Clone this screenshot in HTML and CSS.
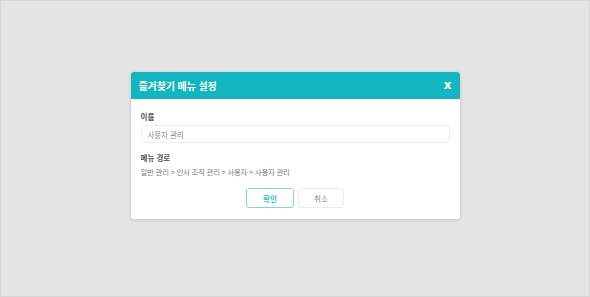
FILE: index.html
```html
<!DOCTYPE html>
<html lang="ko">
<head>
  <meta charset="UTF-8">
  <title>즐겨찾기 메뉴 설정</title>
  <link rel="stylesheet" href="styles.css">
</head>
<body>
  <div class="overlay">
    <div class="modal">
      <div class="modal-header">
        <h2 class="modal-title">즐겨찾기 메뉴 설정</h2>
        <span class="modal-close">x</span>
      </div>
      <div class="modal-body">
        <label class="field-label" for="menuName">이름</label>
        <input class="field-input" id="menuName" type="text" value="사용자 관리">

        <div class="field-label path-label">메뉴 경로</div>
        <div class="menu-path">일반 관리 &gt; 인사 조직 관리 &gt; 사용자 &gt; 사용자 관리</div>

        <div class="modal-actions">
          <button class="btn btn-primary">확인</button>
          <button class="btn btn-cancel">취소</button>
        </div>
      </div>
    </div>
  </div>
</body>
</html>
```
FILE: styles.css
```css
/* Variables */
:root {
  --teal: #13b6bf;
  --bg-color: #e5e5e5;
  --text-color: #555;
  --radius: 3px;
}

* {
  box-sizing: border-box;
}

html, body {
  margin: 0;
  height: 100%;
}

body {
  font-family: "Noto Sans CJK KR", "Noto Sans", sans-serif;
  background-color: var(--bg-color);
  color: var(--text-color);
}

.overlay {
  height: 100%;
  border: 1px solid #d6d6d6;
  display: flex;
  justify-content: center;
  align-items: flex-start;
  padding-top: 71px;
}

/* Modal */
.modal {
  width: 329px;
  background: #fff;
  border-radius: var(--radius);
  box-shadow: 0 1px 4px rgba(0, 0, 0, 0.15);
  overflow: hidden;
}

.modal-header {
  background-color: var(--teal);
  height: 27px;
  display: flex;
  align-items: center;
  justify-content: space-between;
  padding: 0 8px 0 8px;
}

.modal-title {
  margin: 0;
  color: #fff;
  font-size: 10px;
  font-weight: 700;
  letter-spacing: -0.1px;
}

.modal-close {
  color: #fff;
  font-family: "DejaVu Sans", sans-serif;
  font-weight: 700;
  font-size: 12px;
  line-height: 1;
  margin-top: -1px;
}

.modal-body {
  padding: 11px 10px 11px 10px;
}

.field-label {
  display: block;
  font-size: 7.5px;
  font-weight: 700;
  line-height: 13px;
  color: #555;
}

.field-input {
  display: block;
  width: 100%;
  height: 18px;
  margin-top: 2px;
  padding: 0 6px;
  border: 1px solid #ececec;
  border-radius: var(--radius);
  font-family: inherit;
  font-size: 7.5px;
  letter-spacing: -0.1px;
  color: #888;
  outline: none;
}

.path-label {
  margin-top: 8px;
}

.menu-path {
  font-size: 7.4px;
  letter-spacing: -0.2px;
  line-height: 13px;
  color: #777;
  margin-top: 1px;
}

/* Buttons */
.modal-actions {
  display: flex;
  justify-content: center;
  gap: 4px;
  margin-top: 10px;
}

.btn {
  height: 20px;
  border-radius: var(--radius);
  background: #fff;
  font-family: inherit;
  font-size: 7.5px;
  cursor: pointer;
  padding: 0;
}

.btn-primary {
  width: 48px;
  border: 1px solid #7fd6dc;
  color: #3dbcc4;
  font-weight: 700;
}

.btn-cancel {
  width: 46px;
  border: 1px solid #ececec;
  color: #888;
}
```
